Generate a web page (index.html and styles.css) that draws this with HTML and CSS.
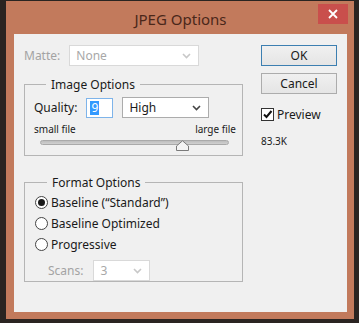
FILE: index.html
```html
<!DOCTYPE html>
<html>
<head>
  <title>JPEG Options</title>
  <link rel="stylesheet" href="styles.css">
</head>
<body>

  <!-- Dialog window -->
  <div class="window">

    <!-- Title bar -->
    <div class="titlebar">
      <span class="title">JPEG Options</span>
      <div class="close">
        <svg width="10" height="10" viewBox="0 0 10 10"><path d="M1 1 L9 9 M9 1 L1 9" stroke="#fff" stroke-width="1.8"/></svg>
      </div>
    </div>

    <!-- Dialog body -->
    <div class="content">

      <div class="left">
        <!-- Matte (disabled) -->
        <div class="row matte">
          <span class="label disabled">Matte:</span>
          <div class="select disabled wide">
            <span>None</span>
            <svg class="chev" width="9" height="6" viewBox="0 0 9 6"><path d="M1 1 L4.5 4.5 L8 1" fill="none" stroke="#c8c8c8" stroke-width="1.6"/></svg>
          </div>
        </div>

        <!-- Image Options group -->
        <fieldset class="group image-group">
          <legend>Image Options</legend>
          <div class="row quality">
            <span class="label">Quality:</span>
            <div class="input focus"><span class="sel">9</span></div>
            <div class="select high">
              <span>High</span>
              <svg class="chev" width="9" height="6" viewBox="0 0 9 6"><path d="M1 1 L4.5 4.5 L8 1" fill="none" stroke="#444" stroke-width="1.6"/></svg>
            </div>
          </div>
          <div class="slider-labels">
            <span>small file</span>
            <span>large file</span>
          </div>
          <div class="slider">
            <div class="track"></div>
            <svg class="thumb" width="15" height="11" viewBox="0 0 15 11"><path d="M1.5 10.5 L1.5 6 L7.5 0.8 L13.5 6 L13.5 10.5 Z" fill="#f4f4f4" stroke="#7a7a7a"/></svg>
          </div>
        </fieldset>

        <!-- Format Options group -->
        <fieldset class="group format-group">
          <legend>Format Options</legend>
          <div class="radio-row"><span class="radio on"></span>Baseline (“Standard”)</div>
          <div class="radio-row"><span class="radio"></span>Baseline Optimized</div>
          <div class="radio-row"><span class="radio"></span>Progressive</div>
          <div class="row scans">
            <span class="label disabled">Scans:</span>
            <div class="select disabled small">
              <span>3</span>
              <svg class="chev" width="9" height="6" viewBox="0 0 9 6"><path d="M1 1 L4.5 4.5 L8 1" fill="none" stroke="#c8c8c8" stroke-width="1.6"/></svg>
            </div>
          </div>
        </fieldset>
      </div>

      <!-- Buttons column -->
      <div class="right">
        <button class="btn default">OK</button>
        <button class="btn">Cancel</button>
        <div class="check-row">
          <span class="checkbox">
            <svg width="11" height="11" viewBox="0 0 11 11"><path d="M2 5.5 L4.5 8 L9.5 2" fill="none" stroke="#111" stroke-width="2"/></svg>
          </span>
          Preview
        </div>
        <div class="size">83.3K</div>
      </div>

    </div>
  </div>

</body>
</html>
```

FILE: styles.css
```css
/* Page background behind the dialog */
body {
  margin: 0;
  background-color: #2a2421;
  font-family: "Segoe UI", "Noto Sans", sans-serif;
  font-size: 12px;
  color: #1a1a1a;
}

/* Window frame */
.window {
  margin: 1px 5px 4px 6px;
  padding: 0 7px 7px 8px;
  background-color: #c27a5c;
  position: relative;
}

/* Title bar */
.titlebar {
  height: 33px;
  display: flex;
  align-items: center;
  justify-content: center;
}

.title {
  font-size: 15px;
  color: #4a271a;
  margin-top: 2px;
}

.close {
  position: absolute;
  top: 3px;
  right: 6px;
  width: 30px;
  height: 20px;
  background-color: #c94f4c;
  display: flex;
  align-items: center;
  justify-content: center;
}

/* Main area */
.content {
  height: 278px;
  background-color: #f0f0f0;
  display: flex;
  box-sizing: border-box;
  padding: 11px 0 0 10px;
}

.left {
  width: 219px;
  display: flex;
  flex-direction: column;
}

.right {
  margin-left: 18px;
  width: 76px;
  display: flex;
  flex-direction: column;
}

.row {
  display: flex;
  align-items: center;
}

.label {
  font-size: 12px;
}

.disabled {
  color: #a3a3a3;
}

/* Dropdowns and inputs */
.select {
  height: 21px;
  box-sizing: border-box;
  background-color: #fff;
  border: 1px solid #acacac;
  display: flex;
  align-items: center;
  justify-content: space-between;
  padding: 0 7px 0 6px;
  font-size: 12px;
}

.select.disabled {
  border-color: #d9d9d9;
  color: #a8a8a8;
}

.matte .wide {
  margin-left: 9px;
  width: 130px;
}

.input {
  width: 27px;
  height: 20px;
  box-sizing: border-box;
  background-color: #fff;
  border: 1px solid #7eb4ea;
  padding: 2px 3px;
  display: flex;
}

.input .sel {
  background-color: #3399ff;
  color: #fff;
  font-size: 12px;
  line-height: 14px;
  padding: 0 1px;
}

/* Group boxes */
.group {
  margin: 0;
  border: 1px solid #b5b5b5;
  padding: 0 0 0 9px;
}

.group legend {
  font-size: 12px;
  margin-left: 12px;
  padding: 0 5px;
}

.image-group {
  margin-top: 10px;
  height: 80px;
  box-sizing: border-box;
}

.quality {
  margin-top: 4px;
}

.quality .input {
  margin-left: 9px;
}

.quality .high {
  margin-left: 9px;
  width: 87px;
}

.slider-labels {
  display: flex;
  justify-content: space-between;
  font-size: 10px;
  margin: 6px 6px 0 0;
  line-height: 11px;
}

.slider {
  position: relative;
  margin: 5px 13px 0 6px;
  height: 11px;
}

.track {
  margin-top: 3px;
  height: 5px;
  border-radius: 3px;
  background: linear-gradient(#bdbdbd, #d0d0d0);
  border: 1px solid #a9a9a9;
  box-sizing: border-box;
}

.thumb {
  position: absolute;
  left: 135px;
  top: 0;
}

.format-group {
  margin-top: 18px;
  height: 108px;
  box-sizing: border-box;
  padding-left: 10px;
}

.radio-row {
  display: flex;
  align-items: center;
  font-size: 12px;
  height: 21px;
  margin-top: 0;
}

.radio-row:first-of-type {
  margin-top: 1px;
}

.radio {
  width: 13px;
  height: 13px;
  box-sizing: border-box;
  border: 1px solid #444;
  border-radius: 50%;
  background-color: #fff;
  margin-right: 3px;
  display: flex;
  align-items: center;
  justify-content: center;
}

.radio.on::after {
  content: "";
  width: 7px;
  height: 7px;
  border-radius: 50%;
  background-color: #1a1a1a;
}

.scans {
  margin-top: 5px;
  padding-left: 13px;
}

.scans .small {
  margin-left: 10px;
  width: 57px;
}

/* Buttons */
.btn {
  height: 21px;
  width: 76px;
  font-family: inherit;
  font-size: 12px;
  color: #1a1a1a;
  background: linear-gradient(#f0f0f0, #e5e5e5);
  border: 1px solid #acacac;
  padding: 0;
}

.btn.default {
  border-color: #3c7fb1;
  margin-bottom: 7px;
}

.check-row {
  margin-top: 12px;
  display: flex;
  align-items: center;
  font-size: 12px;
}

.checkbox {
  width: 13px;
  height: 13px;
  box-sizing: border-box;
  border: 1px solid #333;
  background-color: #fff;
  margin-right: 3px;
  display: flex;
  align-items: center;
  justify-content: center;
}

.size {
  margin-top: 11px;
  font-size: 10px;
}
```
